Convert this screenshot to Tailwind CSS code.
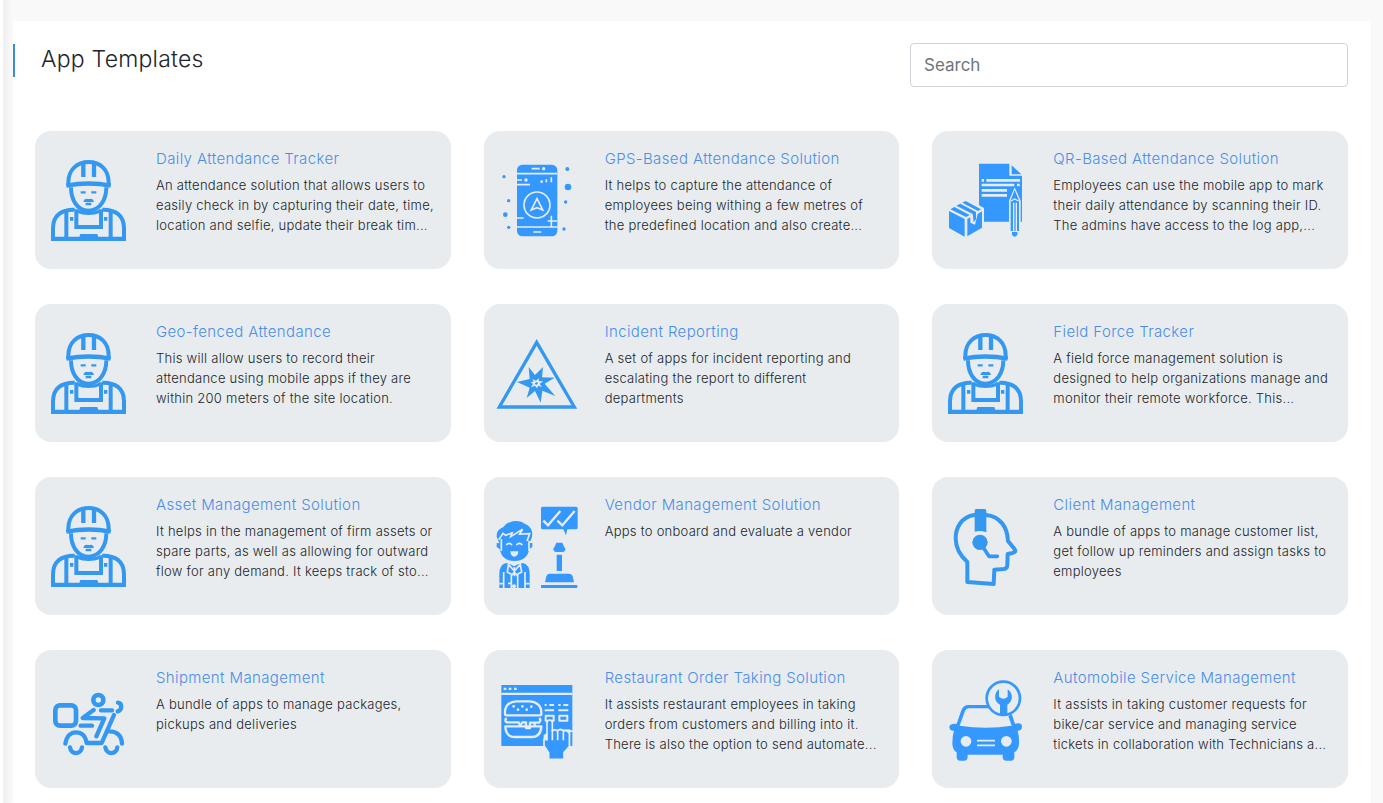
<!DOCTYPE html>
<html lang="en">
<head>
<meta charset="utf-8">
<meta name="viewport" content="width=device-width, initial-scale=1">
<title>App Templates</title>
<script src="https://cdn.jsdelivr.net/npm/@tailwindcss/browser@4"></script>
</head>
<body class="min-h-screen bg-[#f9f9f9] font-['Inter',sans-serif] font-light text-[#212529]">
<svg class="hidden" aria-hidden="true">
  <symbol id="worker" viewBox="0 0 300 300">
    <g fill="none" stroke="#3598f0" stroke-width="12">
      <path d="M85 108V98C85 58 112 36 146 36s60 22 60 62v10"/>
      <path d="M79 107q67-13 133 0" stroke-width="13"/>
      <path d="M130 35v46M162 35v46" stroke-width="13"/>
      <path d="M93 112c0 36 17 69 52 70 36-1 54-34 54-70"/>
      <path d="M104 179C66 178 39 195 39 235v32h213v-32c0-40-27-57-65-56"/>
      <path d="M79 184v82M212 184v82M109 178v53h74v-53"/>
      <path d="M110 183q36 15 72 0" stroke-width="9"/>
      <path d="M122 127h15M154 127h15M137 162h17" stroke-width="7"/>
    </g>
    <path fill="#3598f0" d="M130 156q2-10 10-10 6 2 12 0 8 0 10 10zM90 201h10v11H90zM192 201h10v11h-10zM121 252h51l6 18h-63zM34 260h224v13H34z"/>
  </symbol>
</svg>
<div class="flex min-h-screen">
  <div class="w-[3px] shrink-0 bg-white"></div>
  <div class="w-[10px] shrink-0 bg-linear-to-r from-[#efefef] to-[#fafafa]"></div>
  <main class="mt-[21px] mr-3 min-w-0 grow bg-white pt-[22px] pb-[14px]">
    <header class="flex items-start justify-between pr-[23px]">
      <h1 class="mt-px border-l-2 border-[#3d8bd0] pb-[2px] pl-[26px] text-[23px] leading-[31px] font-light tracking-[0.01em]">App Templates</h1>
      <input type="search" aria-label="Search" placeholder="Search" class="h-11 w-[438px] rounded border border-[#ced4da] bg-white px-[13px] text-[17px] font-normal text-[#495057] placeholder:text-[#6c757d]">
    </header>
    <ul class="mt-11 grid grid-cols-3 gap-x-[33px] gap-y-[35px] pr-[23px] pl-[22px]">
      <li class="flex min-h-[138px] gap-4 rounded-2xl bg-[#e8ecef] pr-[14px] pl-[5px]">
        <svg class="mt-[19px] size-[100px] shrink-0" aria-hidden="true"><use href="#worker"/></svg>
        <div class="pt-[15px]"><h2><a href="#" class="text-[15px] leading-6 tracking-wide text-[#4a8ee8]">Daily Attendance Tracker</a></h2>
        <p class="mt-1 text-[13px] leading-5 tracking-[0.02em]">An attendance solution that allows users to easily check in by capturing their date, time, location and selfie, update their break tim...</p></div>
      </li>
      <li class="flex min-h-[138px] gap-4 rounded-2xl bg-[#e8ecef] pr-[14px] pl-[5px]">
        <svg class="mt-[19px] size-[100px] shrink-0" viewBox="-4 0 300 300" aria-hidden="true">
          <g fill="#3598fe"><rect x="80" y="44" width="121" height="215" rx="16"/><circle cx="41" cy="80" r="5"/><circle cx="55" cy="152" r="5"/><circle cx="45" cy="194" r="7"/><circle cx="55" cy="232" r="5"/><circle cx="231" cy="57" r="6"/><circle cx="233" cy="111" r="10"/><circle cx="226" cy="156" r="5"/><circle cx="221" cy="237" r="5"/></g>
          <g fill="none" stroke="#e8ecef" stroke-width="5"><path d="M80 71h121M80 231h121M124 56h24M129 246h24M80 90h15M80 104h39M80 204h20M172 213h29M183 197v34" /><circle cx="140" cy="165" r="39"/><path d="M140 146l-17 34 17-7 17 7z"/><path d="M183 82v15M168 88v9"/></g>
          <g fill="#e8ecef"><circle cx="160" cy="56" r="5"/><circle cx="107" cy="90" r="5"/><circle cx="154" cy="95" r="4"/></g>
        </svg>
        <div class="pt-[15px]"><h2><a href="#" class="text-[15px] leading-6 tracking-wide text-[#4a8ee8]">GPS-Based Attendance Solution</a></h2>
        <p class="mt-1 text-[13px] leading-5 tracking-[0.02em]">It helps to capture the attendance of employees being withing a few metres of the predefined location and also create...</p></div>
      </li>
      <li class="flex min-h-[138px] gap-4 rounded-2xl bg-[#e8ecef] pr-[14px] pl-[5px]">
        <svg class="mt-[19px] size-[100px] shrink-0" viewBox="-9 0 300 300" aria-hidden="true">
          <path fill="#3598fe" d="M117 41h91v36h38v138H117zM215 46l29 27h-29z"/>
          <path fill="none" stroke="#e8ecef" stroke-width="8" d="M125 91h7M139 91h101M125 105h98M231 105h8M125 121h76M125 136h76"/>
          <path fill="#e8ecef" d="M224 112l18 40v96h-35v-96z"/>
          <path fill="#3598fe" d="M224 120l13 31v92h-25v-92zM216 246h16v8q-8 12-16 0z"/>
          <path fill="none" stroke="#e8ecef" stroke-width="4" d="M221 158v88M229 158v88M213 153l11-6 12 6"/>
          <path fill="#e8ecef" d="M79 145l53 29v56l-54 36-53-30v-62z"/>
          <path fill="#3598fe" d="M27 183l47 24v53l-47-26zM82 207l9-5v16l14 6 8-32 13-8v49l-44 26zM31 178l12-7 46 24-11 6zM49 167l12-6 47 25v22l-7 9-3-25zM67 158l10-5 46 25-9 5z"/>
        </svg>
        <div class="pt-[15px]"><h2><a href="#" class="text-[15px] leading-6 tracking-wide text-[#4a8ee8]">QR-Based Attendance Solution</a></h2>
        <p class="mt-1 text-[13px] leading-5 tracking-[0.02em]">Employees can use the mobile app to mark their daily attendance by scanning their ID. The admins have access to the log app,...</p></div>
      </li>
      <li class="flex min-h-[138px] gap-4 rounded-2xl bg-[#e8ecef] pr-[14px] pl-[5px]">
        <svg class="mt-[19px] size-[100px] shrink-0" aria-hidden="true"><use href="#worker"/></svg>
        <div class="pt-[15px]"><h2><a href="#" class="text-[15px] leading-6 tracking-wide text-[#4a8ee8]">Geo-fenced Attendance</a></h2>
        <p class="mt-1 text-[13px] leading-5 tracking-[0.02em]">This will allow users to record their attendance using mobile apps if they are within 200 meters of the site location.</p></div>
      </li>
      <li class="flex min-h-[138px] gap-4 rounded-2xl bg-[#e8ecef] pr-[14px] pl-[5px]">
        <svg class="mt-[19px] size-[100px] shrink-0" viewBox="-4 -6 300 300" aria-hidden="true">
          <path fill="none" stroke="#3598f0" stroke-width="10" d="M139 52L27 246h225z"/>
          <path fill="#3598f0" d="M115 126l19 24 24-24-3 31 38 1-30 18 32 37-39-16-5 36-17-35-25 21 9-31-38-17 38-9z"/>
          <path fill="#e8ecef" d="M126 162l11 5 8-7 1 9 13 0-11 7 7 10-11-4-4 8-6-8-12 5 6-10-7-6 9-1z"/>
          <path fill="#3598f0" d="M134 174l6-3 3 4-4 4-5-1z"/>
        </svg>
        <div class="pt-[15px]"><h2><a href="#" class="text-[15px] leading-6 tracking-wide text-[#4a8ee8]">Incident Reporting</a></h2>
        <p class="mt-1 text-[13px] leading-5 tracking-[0.02em]">A set of apps for incident reporting and escalating the report to different departments</p></div>
      </li>
      <li class="flex min-h-[138px] gap-4 rounded-2xl bg-[#e8ecef] pr-[14px] pl-[5px]">
        <svg class="mt-[19px] size-[100px] shrink-0" aria-hidden="true"><use href="#worker"/></svg>
        <div class="pt-[15px]"><h2><a href="#" class="text-[15px] leading-6 tracking-wide text-[#4a8ee8]">Field Force Tracker</a></h2>
        <p class="mt-1 text-[13px] leading-5 tracking-[0.02em]">A field force management solution is designed to help organizations manage and monitor their remote workforce. This...</p></div>
      </li>
      <li class="flex min-h-[138px] gap-4 rounded-2xl bg-[#e8ecef] pr-[14px] pl-[5px]">
        <svg class="mt-[19px] size-[100px] shrink-0" aria-hidden="true"><use href="#worker"/></svg>
        <div class="pt-[15px]"><h2><a href="#" class="text-[15px] leading-6 tracking-wide text-[#4a8ee8]">Asset Management Solution</a></h2>
        <p class="mt-1 text-[13px] leading-5 tracking-[0.02em]">It helps in the management of firm assets or spare parts, as well as allowing for outward flow for any demand. It keeps track of sto...</p></div>
      </li>
      <li class="flex min-h-[138px] gap-4 rounded-2xl bg-[#e8ecef] pr-[14px] pl-[5px]">
        <svg class="mt-[19px] size-[100px] shrink-0" viewBox="-4 -3 300 300" aria-hidden="true">
          <path fill="#3598fe" d="M157 29h100q5 0 5 5v58q0 5-5 5h-26l-4 18-8-18h-62q-5 0-5-5V34q0-5 5-5z"/>
          <path fill="none" stroke="#e8ecef" stroke-width="7" d="M159 71l14 14 37-43M201 71l15 14 37-43"/>
          <path fill="#3598fe" d="M198 137h18q3 9 9 18 0 8-9 10h-18q-9-2-9-10 6-9 9-18zM199 173h16v49h-16zM177 230h60q8 0 10 8l4 18h-87l4-18q2-8 9-8zM152 264h109v9H152z"/>
          <path fill="#3598fe" d="M19 119c0-20 8-22 21-30 18-22 50-21 64-8 20 8 25 25 20 43l-7 14h9v12l-9 6c-4 24-20 36-44 36-26 0-40-12-45-36l-9-6v-12l8 1z"/>
          <path fill="none" stroke="#e8ecef" stroke-width="5" d="M25 128l13-19 8 6 19-7-4 11 36-22-9 14 30-1-8 22M33 126v36M116 131v31"/>
          <path fill="none" stroke="#e8ecef" stroke-width="5" d="M48 144q8-10 17 0M78 144q9-10 18 0"/>
          <path fill="#e8ecef" d="M60 163h24q-1 16-12 16t-12-16z"/>
          <path fill="#3598fe" d="M27 273v-42q0-29 20-33l10 2 14 8 16-8 12-2q19 6 19 32v43z"/>
          <path fill="none" stroke="#e8ecef" stroke-width="5" d="M40 225v48M104 225v48M27 260h14M104 260h14M55 197l-4 28 12 7v41M89 197l5 28-12 7v41M54 202l18 20 18-20M72 210v28M63 236l9-11 9 11M53 259h11"/>
          <circle cx="71" cy="268" r="6" fill="#e8ecef"/>
        </svg>
        <div class="pt-[15px]"><h2><a href="#" class="text-[15px] leading-6 tracking-wide text-[#4a8ee8]">Vendor Management Solution</a></h2>
        <p class="mt-1 text-[13px] leading-5 tracking-[0.02em]">Apps to onboard and evaluate a vendor</p></div>
      </li>
      <li class="flex min-h-[138px] gap-4 rounded-2xl bg-[#e8ecef] pr-[14px] pl-[5px]">
        <svg class="mt-[19px] size-[100px] shrink-0" viewBox="-9 -3 300 300" aria-hidden="true">
          <g fill="none" stroke="#3598f0" stroke-width="12" stroke-linecap="round" stroke-linejoin="round"><path d="M103 54C65 59 47 92 47 124c0 37 19 57 35 71v60l79 6 2-43 29-2q9-1 10-11l1-34q18-2 23-8 0-3-3-8l-19-23C202 89 180 58 138 54"/><path d="M127 147l20 31h25" stroke-width="11"/></g>
          <path fill="#3598f0" d="M108 36h26q5 0 5 6v64q-18-7-35-2V42q0-6 4-6z"/><circle cx="120" cy="136" r="23" fill="#3598f0"/>
        </svg>
        <div class="pt-[15px]"><h2><a href="#" class="text-[15px] leading-6 tracking-wide text-[#4a8ee8]">Client Management</a></h2>
        <p class="mt-1 text-[13px] leading-5 tracking-[0.02em]">A bundle of apps to manage customer list, get follow up reminders and assign tasks to employees</p></div>
      </li>
      <li class="flex min-h-[138px] gap-4 rounded-2xl bg-[#e8ecef] pr-[14px] pl-[5px]">
        <svg class="mt-[19px] size-[100px] shrink-0" viewBox="0 -3 300 300" aria-hidden="true">
          <g fill="none" stroke="#3598f0" stroke-width="13" stroke-linecap="round" stroke-linejoin="round"><rect x="46" y="106" width="62" height="61" rx="14" stroke-width="14"/><circle cx="175" cy="90" r="15" stroke-width="14"/><path d="M161 120l-33 24 65 1-24 54M183 121h33M122 167h34M234 98c13 2 13 22-1 26M222 135l-37 84h-45c-5-26-17-32-32-32-18 0-29 14-32 34M207 184c23-1 38 13 39 37M90 232c3 23 32 23 36 0M196 232c4 23 33 23 36 0"/></g>
        </svg>
        <div class="pt-[15px]"><h2><a href="#" class="text-[15px] leading-6 tracking-wide text-[#4a8ee8]">Shipment Management</a></h2>
        <p class="mt-1 text-[13px] leading-5 tracking-[0.02em]">A bundle of apps to manage packages, pickups and deliveries</p></div>
      </li>
      <li class="flex min-h-[138px] gap-4 rounded-2xl bg-[#e8ecef] pr-[14px] pl-[5px]">
        <svg class="mt-[19px] size-[100px] shrink-0" viewBox="-4 -3 300 300" aria-hidden="true">
          <path fill="#3598fe" d="M33 45h213v183H33z"/>
          <path fill="#e8ecef" d="M33 68h213v7H33zM40 53h8v7h-8zM55 53h8v7h-8zM71 53h8v7h-8z"/>
          <g fill="none" stroke="#e8ecef" stroke-width="7" stroke-linejoin="round"><path d="M44 132v-5c0-21 15-33 34-33h39c21 0 36 13 36 34v4q0 4-5 4H49q-5 0-5-4zM48 144q-6 9 1 13h36q3 10 8 5 3-7 7-5h7v17h12v-16h26q9-6 2-14M45 169q1 32 28 32h52q26 0 28-32zM133 157v12"/><path d="M163 105h6M177 105h14M204 105h7M219 105h15M163 121h28M204 121h30" stroke-width="6"/><path d="M166 137h24v15h-24zM207 137h24v15h-24z" stroke-width="6"/></g>
          <g fill="#e8ecef"><circle cx="70" cy="109" r="4"/><circle cx="83" cy="119" r="4"/><circle cx="96" cy="109" r="4"/><circle cx="109" cy="119" r="4"/><circle cx="123" cy="110" r="4"/></g>
          <path fill="#e8ecef" d="M160 195l10-6v-33q8-12 16 0v24l50-2q14 3 14 12v38h-90z"/>
          <path fill="#3598fe" stroke="#e8ecef" stroke-width="5" stroke-linejoin="round" d="M170 210v-54q8-12 16 0v27q8-7 15 0 9-9 18 0 11-4 18 7v40l-16 18v20h-46v-20l-14-21v-20z"/>
          <path fill="none" stroke="#e8ecef" stroke-width="5" d="M186 180v31M202 184v27M219 184v27"/>
          <path fill="#3598fe" d="M240 186h6v42h-6z"/>
        </svg>
        <div class="pt-[15px]"><h2><a href="#" class="text-[15px] leading-6 tracking-wide text-[#4a8ee8]">Restaurant Order Taking Solution</a></h2>
        <p class="mt-1 text-[13px] leading-5 tracking-[0.02em]">It assists restaurant employees in taking orders from customers and billing into it. There is also the option to send automate...</p></div>
      </li>
      <li class="flex min-h-[138px] gap-4 rounded-2xl bg-[#e8ecef] pr-[14px] pl-[5px]">
        <svg class="mt-[19px] size-[100px] shrink-0" viewBox="-9 -3 300 300" aria-hidden="true">
          <path fill="#3598fe" d="M50 161l14-40q6-16 22-16h60v10H88q-10 0-13 8l-16 44q78 12 156 0l-10-29 10-6 10 29q21-4 21 9 0 12-13 12 5 17 4 38-1 20-14 27v14q0 11-10 11h-14q-11 0-11-11v-7H83v7q0 11-11 11H61q-11 0-11-11v-14q-13-8-13-28 0-22 5-37-14 1-14-11 0-11 22-10z"/>
          <path fill="none" stroke="#e8ecef" stroke-width="5" d="M111 212h54M111 226h54"/>
          <g fill="#e8ecef"><circle cx="78" cy="214" r="16"/><circle cx="199" cy="214" r="16"/></g>
          <circle cx="190" cy="85" r="50" fill="#e8ecef" stroke="#3598fe" stroke-width="8"/>
          <path fill="#3598fe" d="M177 58v22q13 12 26 0V58c18 13 16 37-1 46v31h-22v-31c-19-9-19-35-3-46z"/>
        </svg>
        <div class="pt-[15px]"><h2><a href="#" class="text-[15px] leading-6 tracking-wide text-[#4a8ee8]">Automobile Service Management</a></h2>
        <p class="mt-1 text-[13px] leading-5 tracking-[0.02em]">It assists in taking customer requests for bike/car service and managing service tickets in collaboration with Technicians a...</p></div>
      </li>
    </ul>
  </main>
</div>
</body>
</html>
